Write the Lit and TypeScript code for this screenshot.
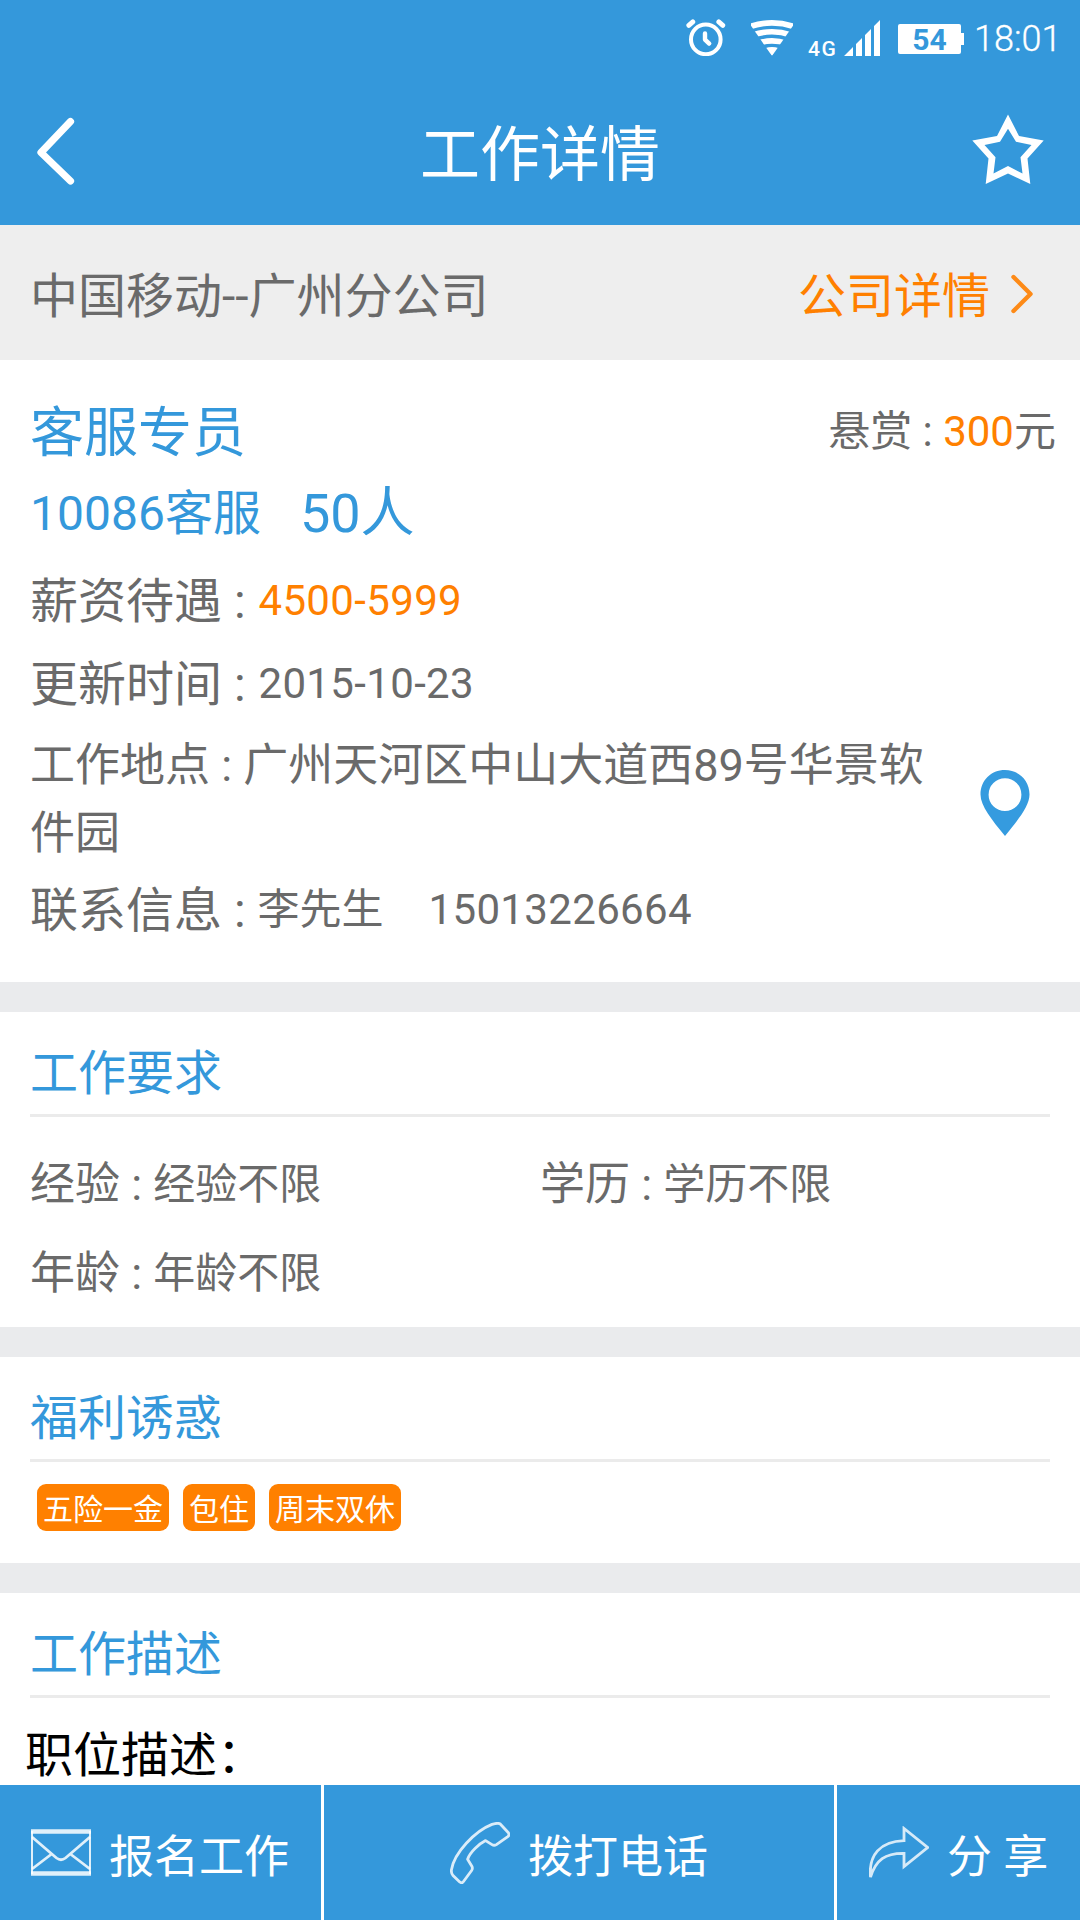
import { LitElement, html, css, svg } from "lit";
import { customElement, property } from "lit/decorators.js";

const alarmIcon = svg`<svg class="alarm" width="40" height="37" viewBox="0 0 40 37" fill="none" stroke="#fff" stroke-linecap="round">
  <circle cx="19.8" cy="20.4" r="14.8" stroke-width="4"/>
  <path d="M19 14.5V20.6L23.2 24.6" stroke-width="4.4" stroke-linejoin="round"/>
  <path d="M2.8 6.4L6.8 2.9M36.8 6.4L32.8 2.9" stroke-width="4.8"/>
</svg>`;

const wifiIcon = svg`<svg class="wifi" width="42" height="36" viewBox="0 0 42 36">
  <defs><clipPath id="fan"><path d="M-2 3L21 36L44 3V-4H-2Z"/></clipPath></defs>
  <g clip-path="url(#fan)" fill="none" stroke="#fff" stroke-width="5.6">
    <path d="M-3 7.2Q21 -1.4 45 7.2"/>
    <path d="M2 15Q21 8.6 40 15"/>
    <path d="M6 23.4Q21 18.4 36 23.4"/>
    <path d="M14 28.2Q21 25.6 28 28.2L21 36Z" fill="#fff" stroke="none"/>
  </g>
</svg>`;

const signalIcon = svg`<svg class="signal" width="36" height="36" viewBox="0 0 36 36" fill="#fff">
  <path d="M0 36L9 27V36ZM12 36V24L18 18V36ZM21 36V15L27 9V36ZM30 36V6L36 0V36Z"/>
</svg>`;

const backIcon = svg`<svg class="back" width="42" height="70" viewBox="0 0 42 70" fill="none" stroke="#fff" stroke-width="7.2" stroke-linecap="round" stroke-linejoin="round">
  <path d="M36.5 5.5L7 36.5L36.5 65"/>
</svg>`;

const starIcon = svg`<svg width="72" height="72" viewBox="0 0 72 72" fill="#fff">
  <path fill-rule="evenodd" d="M36 1.5L47 23L71.7 27.5L55.5 45.5L58.3 71L36 60.4L13.7 71L16.5 45.5L.3 27.5L25 23ZM36 15.7L28 28.7L12.5 32L23.5 44.2L21.5 60.6L36 53L50.5 60.6L48.5 44.2L59.5 32L44 28.7Z"/>
</svg>`;

const chevronIcon = svg`<svg class="chevron" width="24" height="40" viewBox="0 0 24 40" fill="none" stroke="#ff8000" stroke-width="4.4" stroke-linecap="round" stroke-linejoin="round" opacity=".9">
  <path d="M3.5 3L20.5 20L3.5 37"/>
</svg>`;

const pinIcon = svg`<svg width="50" height="66" viewBox="0 0 50 66" fill="#359bdf">
  <path fill-rule="evenodd" d="M25 0C39 0 49.5 10.5 49.5 24.5C49.5 36 38 50 25 66C12 50 .5 36 .5 24.5C.5 10.5 11 0 25 0ZM25 8.3A16.4 16.4 0 1 0 25 41.1A16.4 16.4 0 1 0 25 8.3Z"/>
</svg>`;

const mailIcon = svg`<svg width="60" height="50" viewBox="0 0 60 50" fill="none" stroke="#fff" stroke-opacity=".85">
  <path d="M0 3.5H60M0 45.5H60" stroke-width="4.4"/>
  <path d="M1 3V46M59 3V46" stroke-width="2"/>
  <path d="M1 9L25.5 30Q30 33.5 34.5 30L59 9M1 41L20 26.5M59 41L40 26.5" stroke-width="2.8"/>
</svg>`;

const phoneIcon = svg`<svg width="60" height="62" viewBox="0 0 60 62" fill="none" stroke="#fff" stroke-opacity=".82" stroke-width="2.8" stroke-linejoin="round">
  <path d="M50 1.8C48 .8 45 1.4 42 2.4C25 9 4 31 1.4 48C1.2 50.5 1.5 52 3 53.5L10 60.2C11.5 61.2 12.6 60.8 13.5 59.5L21.6 48.5C22.6 47 22.6 46 22 44.5L17.6 37.2C20 30 29 22 35.6 18.6L42 22.6C43.6 23.6 45 23.4 46.4 22.6L57.8 14.6C59.4 13.4 59.3 12.2 58.4 10.8Z"/>
</svg>`;

const shareIcon = svg`<svg width="60" height="54" viewBox="0 0 60 54" fill="none" stroke="#fff" stroke-opacity=".8" stroke-width="2.8">
  <path d="M1.5 51C-.5 29 11 15.5 35 14.7V2.5L58.6 21.5L35 40.5V27.3C16 27 7 34 1.5 51Z"/>
</svg>`;

@customElement("info-section")
export class InfoSection extends LitElement {
  @property() heading = "";

  static styles = css`
    :host { display: block; flex: none; border-top: 30px solid #eaebed; padding: 0 30px; }
    .heading {
      height: 102px; line-height: 123px; font-size: 48px; font-weight: 400; margin: 0;
      color: #3498db; border-bottom: 3px solid #ebebeb; overflow: hidden;
    }
  `;

  render() {
    return html`<h2 class="heading">${this.heading}</h2><slot></slot>`;
  }
}

@customElement("app-root")
export class AppRoot extends LitElement {
  private requirements = [
    ["经验", "经验不限"],
    ["学历", "学历不限"],
    ["年龄", "年龄不限"],
  ];
  private benefits = ["五险一金", "包住", "周末双休"];

  static styles = css`
    :host {
      display: flex; flex-direction: column; width: 1080px; height: 1920px; overflow: hidden;
      background: #fff; color: #6a6a6a; font-family: Roboto, "Noto Sans CJK SC", sans-serif;
      font-size: 48px;
    }
    span { white-space: pre; }
    svg { display: block; flex: none; }
    .status { flex: none; height: 75px; background: #3498db; color: #fff; display: flex; align-items: flex-start; padding-left: 686px; }
    .alarm { margin-top: 19px; }
    .wifi { margin: 20px 0 0 25px; }
    .net { margin: 37px 0 0 15px; width: 36px; font-size: 21px; line-height: 24px; font-weight: 500; letter-spacing: 1.5px; }
    .signal { margin-top: 20px; }
    .battery { margin: 24px 0 0 18px; width: 63px; height: 30px; border-radius: 2px; background: #fff; color: #3498db; font-size: 30px; line-height: 31px; font-weight: 700; text-align: center; }
    .cap { margin-top: 33px; width: 3px; height: 12px; background: #fff; }
    .time { margin: 17px 0 0 10px; font-size: 36px; line-height: 44px; font-weight: 300; -webkit-text-stroke: .3px #fff; }
    .nav { flex: none; height: 150px; background: #3498db; color: #fff; display: flex; align-items: center; justify-content: space-between; padding: 0 36px 2px 34px; box-sizing: border-box; }
    .back { margin-top: 3px; }
    .title { font-size: 60px; font-weight: 400; line-height: 80px; margin: 13px -32px 0 0; }
    .company { flex: none; height: 135px; background: #eee; display: flex; align-items: center; justify-content: space-between; padding: 0 46px 1px 30px; box-sizing: border-box; }
    .company-link { display: flex; align-items: center; gap: 20px; color: #ff8000; }
    .chevron { margin-top: 3px; }
    .job { flex: none; height: 622px; box-sizing: border-box; padding: 30px 24px 0 30px; line-height: 60px; }
    .row { display: flex; align-items: center; }
    .head { height: 84px; justify-content: space-between; }
    .role { font-size: 54px; color: #3498db; padding-top: 4px; }
    .small { font-size: 42px; }
    .num { font-size: 42px; letter-spacing: .35px; padding-left: 1px; margin-top: -2px; }
    .accent { color: #ff8000; }
    .opening { height: 80px; color: #3498db; gap: 39px; }
    .count { font-size: 54px; }
    .salary { height: 94px; padding-top: 1px; margin-bottom: -1px; }
    .updated { height: 72px; padding-top: 1px; margin-bottom: -1px; }
    .place { display: flex; align-items: center; height: 136px; margin-top: 10px; justify-content: space-between; padding-right: 26px; }
    .address { width: 901px; padding-top: 4px; font-size: 45px; line-height: 68px; word-break: break-all; }
    .pin { padding-top: 10px; }
    .contact { height: 88px; margin-top: -33px; padding-top: 34px; }
    .contact .small { margin-top: -2px; }
    .phone { margin-left: 44px; }
    .requirements { display: grid; grid-template-columns: 1fr 1fr; grid-auto-rows: 89px; padding: 23px 0 9px; height: 178px; }
    .req { display: flex; align-items: center; font-size: 45px; line-height: 60px; }
    .tags { display: flex; gap: 14px; padding: 22px 7px 32px; }
    .tag { height: 47px; line-height: 51px; border-radius: 9px; padding: 0 6px; background: #ff8000; color: #fff; font-size: 30px; }
    .desc { height: 87px; margin: 0 -5px; line-height: 115px; color: #000; overflow: hidden; }
    .actions { flex: none; height: 135px; display: grid; grid-template-columns: 321px 510px 243px; gap: 3px; background: #fff; color: #fff; font-size: 45px; }
    .action { background: #3498db; display: flex; align-items: center; box-sizing: border-box; padding-top: 1px; }
    .apply { padding-left: 31px; gap: 18px; }
    .call { padding-left: 126px; gap: 18px; }
    .share { padding-left: 32px; gap: 18px; }
    .label { padding-top: 1px; }
  `;

  render() {
    return html`
      <div class="status">${alarmIcon}${wifiIcon}<span class="net">4G</span>${signalIcon}<span class="battery">54</span><span class="cap"></span><span class="time">18:01</span></div>
      <header class="nav">${backIcon}<h1 class="title">工作详情</h1>${starIcon}</header>
      <div class="company"><span>中国移动--广州分公司</span><span class="company-link">公司详情${chevronIcon}</span></div>
      <section class="job">
        <div class="row head"><span class="role">客服专员</span><span class="small">悬赏 : <span class="accent">300</span>元</span></div>
        <div class="row opening"><span>10086客服</span><span class="count">50人</span></div>
        <div class="row salary"><span>薪资待遇 : </span><span class="num accent">4500-5999</span></div>
        <div class="row updated"><span>更新时间 : </span><span class="num">2015-10-23</span></div>
        <div class="place"><div class="address">工作地点 : 广州天河区中山大道西89号华景软件园</div><div class="pin">${pinIcon}</div></div>
        <div class="row contact"><span>联系信息 : </span><span class="small">李先生</span><span class="num phone">15013226664</span></div>
      </section>
      <info-section heading="工作要求">
        <div class="requirements">${this.requirements.map(([name, value]) => html`<div class="req"><span>${name} : </span><span class="small">${value}</span></div>`)}</div>
      </info-section>
      <info-section heading="福利诱惑">
        <div class="tags">${this.benefits.map((name) => html`<span class="tag">${name}</span>`)}</div>
      </info-section>
      <info-section heading="工作描述"><div class="desc">职位描述：</div></info-section>
      <footer class="actions">
        <div class="action apply">${mailIcon}<span class="label">报名工作</span></div>
        <div class="action call">${phoneIcon}<span class="label">拨打电话</span></div>
        <div class="action share">${shareIcon}<span class="label">分 享</span></div>
      </footer>
    `;
  }
}
